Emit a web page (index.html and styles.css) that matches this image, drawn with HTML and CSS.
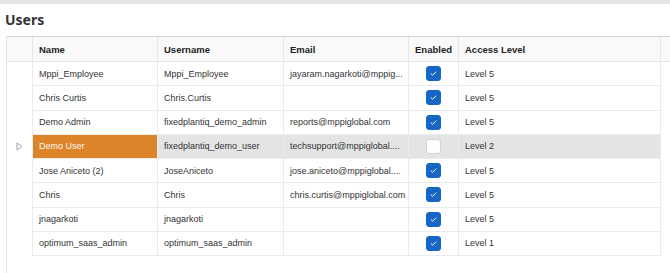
FILE: index.html
```html
<!DOCTYPE html>
<html lang="en">
<head>
  <meta charset="UTF-8" />
  <title>Users</title>
  <link rel="stylesheet" href="styles.css">
</head>
<body>
  <div class="topbar"></div>
  <h2 class="page-title">Users</h2>

  <div class="grid-wrap">
    <div class="grid">
      <div class="cell head ind"></div>
      <div class="cell head">Name</div>
      <div class="cell head">Username</div>
      <div class="cell head">Email</div>
      <div class="cell head center">Enabled</div>
      <div class="cell head">Access Level</div>
      <div class="cell head filler"></div>

      <div class="row">
        <div class="cell ind"></div>
        <div class="cell name">Mppi_Employee</div>
        <div class="cell">Mppi_Employee</div>
        <div class="cell">jayaram.nagarkoti@mppig...</div>
        <div class="cell center"><span class="check on"><svg viewBox="0 0 15 15"><path d="M4.4 7.6 L6.5 9.6 L10.6 5.4"/></svg></span></div>
        <div class="cell">Level 5</div>
        <div class="cell filler"></div>
      </div>

      <div class="row">
        <div class="cell ind"></div>
        <div class="cell name">Chris Curtis</div>
        <div class="cell">Chris.Curtis</div>
        <div class="cell"></div>
        <div class="cell center"><span class="check on"><svg viewBox="0 0 15 15"><path d="M4.4 7.6 L6.5 9.6 L10.6 5.4"/></svg></span></div>
        <div class="cell">Level 5</div>
        <div class="cell filler"></div>
      </div>

      <div class="row">
        <div class="cell ind"></div>
        <div class="cell name">Demo Admin</div>
        <div class="cell">fixedplantiq_demo_admin</div>
        <div class="cell">reports@mppiglobal.com</div>
        <div class="cell center"><span class="check on"><svg viewBox="0 0 15 15"><path d="M4.4 7.6 L6.5 9.6 L10.6 5.4"/></svg></span></div>
        <div class="cell">Level 5</div>
        <div class="cell filler"></div>
      </div>

      <div class="row selected">
        <div class="cell ind"><svg class="pointer" viewBox="0 0 7 9"><path d="M1 1 L6 4.5 L1 8 Z"/></svg></div>
        <div class="cell name">Demo User</div>
        <div class="cell">fixedplantiq_demo_user</div>
        <div class="cell">techsupport@mppiglobal....</div>
        <div class="cell center"><span class="check"></span></div>
        <div class="cell">Level 2</div>
        <div class="cell filler"></div>
      </div>

      <div class="row">
        <div class="cell ind"></div>
        <div class="cell name">Jose Aniceto (2)</div>
        <div class="cell">JoseAniceto</div>
        <div class="cell">jose.aniceto@mppiglobal....</div>
        <div class="cell center"><span class="check on"><svg viewBox="0 0 15 15"><path d="M4.4 7.6 L6.5 9.6 L10.6 5.4"/></svg></span></div>
        <div class="cell">Level 5</div>
        <div class="cell filler"></div>
      </div>

      <div class="row">
        <div class="cell ind"></div>
        <div class="cell name">Chris</div>
        <div class="cell">Chris</div>
        <div class="cell">chris.curtis@mppiglobal.com</div>
        <div class="cell center"><span class="check on"><svg viewBox="0 0 15 15"><path d="M4.4 7.6 L6.5 9.6 L10.6 5.4"/></svg></span></div>
        <div class="cell">Level 5</div>
        <div class="cell filler"></div>
      </div>

      <div class="row">
        <div class="cell ind"></div>
        <div class="cell name">jnagarkoti</div>
        <div class="cell">jnagarkoti</div>
        <div class="cell"></div>
        <div class="cell center"><span class="check on"><svg viewBox="0 0 15 15"><path d="M4.4 7.6 L6.5 9.6 L10.6 5.4"/></svg></span></div>
        <div class="cell">Level 5</div>
        <div class="cell filler"></div>
      </div>

      <div class="row">
        <div class="cell ind"></div>
        <div class="cell name">optimum_saas_admin</div>
        <div class="cell">optimum_saas_admin</div>
        <div class="cell"></div>
        <div class="cell center"><span class="check on"><svg viewBox="0 0 15 15"><path d="M4.4 7.6 L6.5 9.6 L10.6 5.4"/></svg></span></div>
        <div class="cell">Level 1</div>
        <div class="cell filler"></div>
      </div>
    </div>
  </div>
</body>
</html>
```

FILE: styles.css
```css
* {
  box-sizing: border-box;
  margin: 0;
  padding: 0;
}

html, body {
  height: 100%;
}

body {
  display: flex;
  flex-direction: column;
  overflow: hidden;
  background: #fff;
  color: #333;
  font-family: 'Liberation Sans', Arial, sans-serif;
  font-size: 9px;
}

.topbar {
  flex-shrink: 0;
  height: 4px;
  background: #e6e6e6;
}

.page-title {
  padding: 6px 0 0 5px;
  margin-bottom: 7px;
  font-family: 'Noto Sans', sans-serif;
  font-size: 14px;
  font-weight: 700;
  line-height: 19px;
  color: #333;
}

/* grid */
.grid-wrap {
  flex: 1;
  margin-left: 6px;
  border-top: 1px solid #d6d6d6;
  border-left: 1px solid #e4e4e4;
}

.grid {
  display: grid;
  grid-template-columns: 26px 125px 126px 125px 50px 202px 1fr;
  grid-template-rows: 25px;
  grid-auto-rows: 24.25px;
}

.row {
  display: contents;
}

.cell {
  display: flex;
  align-items: center;
  padding: 0 6px;
  border-right: 1px solid #ebebeb;
  border-bottom: 1px solid #ebebeb;
  white-space: nowrap;
  overflow: hidden;
}

.cell.center {
  justify-content: center;
  padding: 0;
}

.head {
  background: #f9f9f9;
  border-color: #e6e6e6;
  font-size: 9.5px;
  font-weight: 700;
  color: #222;
}

.row .ind {
  border-bottom: none;
  justify-content: center;
  padding: 0;
}

.filler {
  border-right: none;
}

.row .filler {
  border-bottom: none;
}

/* checkbox */
.check {
  display: block;
  width: 15px;
  height: 15px;
  border-radius: 3px;
  background: #fff;
  border: 1px solid #d2d2d2;
}

.check.on {
  background: #1666c5;
  border-color: #1666c5;
}

.check svg {
  display: block;
  width: 13px;
  height: 13px;
  fill: none;
  stroke: #fff;
  stroke-width: 1.1;
}

.pointer {
  width: 7px;
  height: 9px;
  fill: none;
  stroke: #a3a3a3;
  stroke-width: 1;
}

/* selected row */
.row.selected .cell {
  background: #e4e4e4;
}

.row.selected .ind,
.row.selected .filler {
  background: #fff;
}

.row.selected .name {
  background: #db8429;
  color: #fff6ee;
}
```
